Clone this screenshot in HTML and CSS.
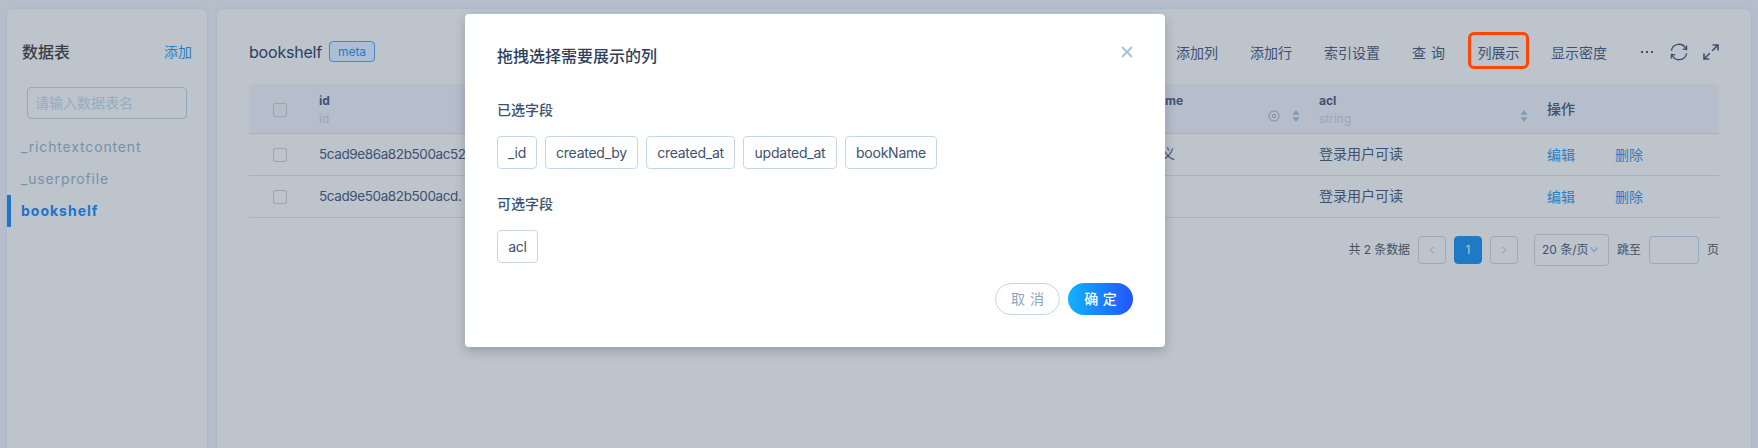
FILE: index.html
```html
<!DOCTYPE html>
<html lang="zh-CN">
<head>
<meta charset="utf-8">
<title>bookshelf</title>
<link rel="stylesheet" href="styles.css">
</head>
<body>
<div class="app">
  <aside class="panel sidebar">
    <div class="side-head"><h2 class="side-title">数据表</h2><a class="link">添加</a></div>
    <div class="search">请输入数据表名</div>
    <ul class="tables">
      <li class="table-name">_richtextcontent</li>
      <li class="table-name">_userprofile</li>
      <li class="table-name active">bookshelf</li>
    </ul>
  </aside>
  <main class="panel main">
    <header class="toolbar">
      <div class="heading"><span class="name">bookshelf</span><span class="meta">meta</span></div>
      <nav class="actions">
        <span class="action">添加列</span>
        <span class="action">添加行</span>
        <span class="action">索引设置</span>
        <span class="action spaced">查 询</span>
        <span class="action marked">列展示</span>
        <span class="action">显示密度</span>
        <svg class="dots" width="14" height="16" viewBox="0 0 14 16"><path d="M1 7h2v2H1zM6 7h2v2H6zM11 7h2v2h-2z" fill="currentColor"/></svg>
        <svg class="refresh" width="18" height="18" viewBox="0 0 18 18" fill="none" stroke="currentColor" stroke-width="1.3"><path d="M1.4 7.6A7.6 7.6 0 0 1 16 6.2M16.6 10.4A7.6 7.6 0 0 1 2 11.8M16.6 2.6v4l-3.8-.5M1.4 15.4v-4l3.8.5"/></svg>
        <svg class="expand" width="16" height="16" viewBox="0 0 16 16" fill="none" stroke="currentColor" stroke-width="1.6"><path d="M9.6 1H15v5.4M14.8 1.2 9.2 6.8M6.4 15H1V9.6M1.2 14.8 6.8 9.2"/></svg>
      </nav>
    </header>
    <div class="grid">
      <div class="row head">
        <span class="check"></span>
        <div class="col"><b>id</b><i>id</i></div>
        <div class="col book"><b>me</b></div>
        <div class="tools">
          <svg width="12" height="12" viewBox="0 0 12 12" fill="none" stroke="#7f8b9d"><path d="M6 .6 7.2 1.4 8.7 1.3 9.3 2.7 10.6 3.4 10.5 4.8 11.4 6 10.5 7.2 10.6 8.6 9.3 9.3 8.7 10.7 7.2 10.6 6 11.4 4.8 10.6 3.3 10.7 2.7 9.3 1.4 8.6 1.5 7.2.6 6 1.5 4.8 1.4 3.4 2.7 2.7 3.3 1.3 4.8 1.4Z"/><circle cx="6" cy="6" r="1.7"/></svg>
          <svg class="sort" width="8" height="12" viewBox="0 0 8 12"><path d="M4 0 7.5 4.8h-7zM4 12 .5 7.2h7z"/></svg>
        </div>
        <div class="col"><b>acl</b><i>string</i></div>
        <div class="tools"><svg class="sort" width="8" height="12" viewBox="0 0 8 12"><path d="M4 0 7.5 4.8h-7zM4 12 .5 7.2h7z"/></svg></div>
        <strong class="ops-title">操作</strong>
      </div>
      <div class="row">
        <span class="check"></span><span class="cell id">5cad9e86a82b500ac52</span><span class="cell book">义</span><span></span><span class="cell">登录用户可读</span><span></span>
        <div class="ops"><a class="link">编辑</a><a class="link">删除</a></div>
      </div>
      <div class="row">
        <span class="check"></span><span class="cell id">5cad9e50a82b500acd.</span><span></span><span></span><span class="cell">登录用户可读</span><span></span>
        <div class="ops"><a class="link">编辑</a><a class="link">删除</a></div>
      </div>
    </div>
    <footer class="pager">
      <span class="total">共 2 条数据</span>
      <span class="page"><svg width="6" height="8" viewBox="0 0 6 8"><path d="M5 .8 1 4l4 3.2"/></svg></span>
      <span class="page current">1</span>
      <span class="page"><svg width="6" height="8" viewBox="0 0 6 8"><path d="M1 .8 5 4 1 7.2"/></svg></span>
      <span class="size">20 条/页<svg width="8" height="6" viewBox="0 0 8 6"><path d="M.7.5 4 4.8 7.3.5"/></svg></span>
      <span class="jump">跳至</span><span class="jump-box"></span><span class="unit">页</span>
    </footer>
  </main>
  <section class="modal">
    <div class="modal-head">
      <h3 class="modal-title">拖拽选择需要展示的列</h3>
      <svg class="close" width="12" height="12" viewBox="0 0 12 12"><path d="M1 1 11 11M11 1 1 11"/></svg>
    </div>
    <h4 class="group-title">已选字段</h4>
    <div class="tags">
      <span class="tag t-id">_id</span><span class="tag t-by">created_by</span><span class="tag t-at">created_at</span><span class="tag t-up">updated_at</span><span class="tag t-book">bookName</span>
    </div>
    <h4 class="group-title">可选字段</h4>
    <div class="tags"><span class="tag t-acl">acl</span></div>
    <div class="buttons"><span class="btn">取 消</span><span class="btn primary">确 定</span></div>
  </section>
</div>
</body>
</html>
```
FILE: styles.css
```css
* { box-sizing: border-box; }
body { margin: 0; background: #b7becb; color: #3d5170; font: 14px/20px Inter, "Noto Sans CJK SC", sans-serif; }
h2, h3, h4, ul { margin: 0; padding: 0; }
svg { display: block; flex: none; }
.app { position: relative; display: flex; gap: 10px; height: 448px; padding: 9px 7px 0; overflow: hidden; }
.panel { height: 460px; background: #bdc4cc; border-radius: 5px; box-shadow: 0 0 4px #9fb3cb; }
.sidebar { width: 200px; flex: none; }
.main { flex: 1; padding: 0 32px; }
.link { color: #2a7fc4; }

.side-head { display: flex; justify-content: space-between; align-items: center; padding: 32px 15px 0; height: 54px; }
.side-title { font-size: 16px; font-weight: 500; color: #373f4a; }
.search { height: 32px; margin: 24px 20px 12px; padding: 5px 7px; border: 1px solid #90a9c0; border-radius: 4px; color: #98abbf; }
.tables { list-style: none; }
.table-name { height: 32px; padding-left: 14px; line-height: 32px; letter-spacing: .85px; color: #7890aa; }
.active { padding-left: 10px; border-left: 4px solid #1e74cb; color: #1e74cb; font-weight: 700; letter-spacing: 1px; }

.toolbar { display: flex; justify-content: space-between; height: 75px; padding-top: 32px; }
.heading { display: flex; align-items: flex-start; gap: 7px; }
.name { width: 73px; font-size: 16px; line-height: 22px; letter-spacing: -.2px; white-space: nowrap; color: #2c405a; }
.meta { width: 46px; height: 21px; border: 1px solid #4189cc; border-radius: 4px; background: #adbfd2; color: #2a7bc8; font-size: 12px; line-height: 19px; text-align: center; }
.actions { display: flex; align-items: flex-start; line-height: 24px; }
.action { margin-right: 32px; white-space: nowrap; }
.spaced { width: 34px; margin-right: 22px; word-spacing: 1px; }
.marked { width: 61px; height: 37px; margin: -9px 22px 0 0; border: 3px solid #ff4604; border-radius: 6px; text-align: center; line-height: 36px; }
.dots { margin: 3px 16px 0 1px; }
.refresh { margin: 2px 15px 0 0; }
.expand { margin-top: 3px; }

.row { display: grid; grid-template-columns: 70px 800px 50px 150px 180px 48px 1fr; align-items: center; height: 42px; border-bottom: 1px solid #aab1bb; }
.cell { padding-bottom: 2px; white-space: nowrap; }
.id { font-size: 13.5px; letter-spacing: -.4px; }
.head { grid-template-columns: 70px 800px 78px 122px 180px 48px 1fr; height: 50px; padding-top: 2px; background: #b6bdcb; border-radius: 5px 5px 0 0; }
.check { width: 14px; height: 14px; margin-left: 24px; border: 1px solid #9da4ae; border-radius: 2px; }
.col { display: flex; flex-direction: column; height: 36px; font-size: 12px; line-height: 18px; }
.head .book { padding-left: 46px; }
.cell.book { padding-left: 42px; }
.col i { color: #9ea6b3; font-style: normal; }
.tools { display: flex; justify-content: flex-end; gap: 12px; padding: 12px 19px 0 0; }
.sort { fill: #809bb8; }
.ops-title { padding-bottom: 2px; font-weight: 500; }
.ops { display: flex; gap: 40px; }

.pager { display: flex; align-items: center; margin-top: 16px; height: 32px; justify-content: flex-end; font-size: 12px; color: #46505e; white-space: nowrap; }
.total { letter-spacing: -.1px; }
.page { display: grid; place-items: center; width: 28px; height: 28px; margin-left: 8px; border: 1px solid #a0a9b5; border-radius: 4px; }
.page path { fill: none; stroke: #929ca9; }
.current { border-color: #1e7ac5; background: #1e7ac5; color: #bdc4cc; }
.size { display: flex; align-items: center; justify-content: space-between; width: 75px; height: 32px; margin: 0 8px 0 16px; padding: 0 10px 0 7px; border: 1px solid #a0a9b5; border-radius: 4px; color: #3d5170; }
.size path { fill: none; stroke: #7f9cb9; stroke-width: 1.3; }
.jump-box { width: 50px; height: 28px; margin: 0 8px; border: 1px solid #91a9c2; border-radius: 4px; }

.modal { position: absolute; left: 465px; top: 14px; width: 700px; height: 333px; padding: 32px; border-radius: 4px; background: #fff; box-shadow: 0 4px 12px rgba(0, 0, 0, .2); }
.modal-head { display: flex; justify-content: space-between; height: 52px; }
.modal-title { font-size: 16px; line-height: 20px; font-weight: 500; color: #2c405a; }
.close { stroke: #a4c4dd; stroke-width: 1.9; }
.group-title { height: 38px; font-size: 14px; line-height: 24px; font-weight: 500; }
.tags { display: flex; gap: 8px; height: 56px; }
.tag { height: 33px; border: 1px solid #c5d8e7; border-radius: 4px; line-height: 32px; letter-spacing: -.25px; text-align: center; }
.t-id { width: 40px; } .t-by { width: 93px; } .t-at { width: 89px; } .t-up { width: 94px; } .t-book { width: 92px; } .t-acl { width: 41px; }
.buttons { display: flex; justify-content: flex-end; gap: 8px; margin-top: -3px; }
.btn { width: 65px; height: 32px; border: 1px solid #c5d8e7; border-radius: 16px; color: #8ba7c0; line-height: 30px; text-align: center; word-spacing: 1px; }
.primary { border: 0; background: linear-gradient(90deg, #10b2ff, #2454ff); color: #fff; font-weight: 500; line-height: 32px; }
```
